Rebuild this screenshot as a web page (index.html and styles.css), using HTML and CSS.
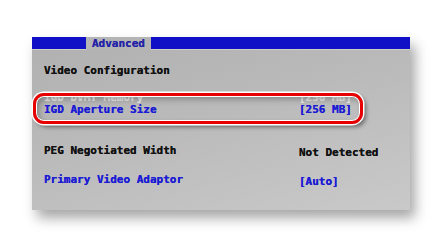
FILE: index.html
```html
<!DOCTYPE html>
<html>
<head>
<meta charset="utf-8">
<link rel="stylesheet" href="styles.css">
</head>
<body>
<div class="panel">
  <div class="menubar">
    <div class="tab">Advanced</div>
  </div>
  <div class="content">
    <div class="title">Video Configuration</div>
    <div class="row faint"><span>IGD DVMT Memory</span><span>[256 MB]</span></div>
    <div class="row blue"><span>IGD Aperture Size</span><span>[256 MB]</span></div>
    <div class="row black gap"><span>PEG Negotiated Width</span><span class="low">Not Detected</span></div>
    <div class="row blue"><span>Primary Video Adaptor</span><span class="low">[Auto]</span></div>
  </div>
  <div class="ring"></div>
</div>
</body>
</html>
```
FILE: styles.css
```css
html, body {
  margin: 0;
  padding: 0;
  background: #ffffff;
}
body {
  width: 442px;
  height: 243px;
  overflow: hidden;
  font-family: "DejaVu Sans Mono", "Liberation Mono", monospace;
  font-weight: bold;
  font-size: 11px;
}
.panel {
  position: relative;
  margin: 37px 0 0 32px;
  width: 378px;
  height: 173px;
  background: linear-gradient(165deg, #b0b0b0 0%, #bababa 45%, #c9c9c9 100%);
  box-shadow: 5px 8px 12px rgba(0, 0, 0, 0.35);
}
.menubar {
  height: 12px;
  background: #1010c6;
  border-bottom: 1px solid #cfcfc2;
  display: flex;
}
.tab {
  margin-left: 54px;
  width: 65px;
  height: 13px;
  background: #b4b4b4;
  color: #2424a8;
  text-align: center;
  line-height: 13px;
  text-shadow: 0 0 0.5px currentColor;
}
.content {
  padding: 14px 0 0 12px;
  text-shadow: 0 0 0.6px currentColor;
}
.title {
  line-height: 14px;
  color: #121212;
}
.row {
  display: grid;
  grid-template-columns: 255px auto;
  line-height: 14px;
}
.faint {
  margin-top: 13px;
  color: #e6e6e6;
  height: 9px;
  overflow: visible;
}
.blue {
  color: #1c1cd4;
  margin-top: 3px;
}
.black {
  color: #121212;
}
.gap {
  margin-top: 27px;
}
.black + .blue {
  margin-top: 13px;
}
.low {
  padding-top: 2px;
}
.ring {
  position: absolute;
  left: 1px;
  top: 56px;
  width: 324px;
  height: 25px;
  border: 3px solid #e80000;
  border-radius: 11px;
  box-shadow: 0 0 0 1.5px #ffffff, inset 0 0 0 1px #ffffff, 3px 3px 4px rgba(0, 0, 0, 0.45), inset 3px 3px 6px rgba(0, 0, 0, 0.3);
}
```
